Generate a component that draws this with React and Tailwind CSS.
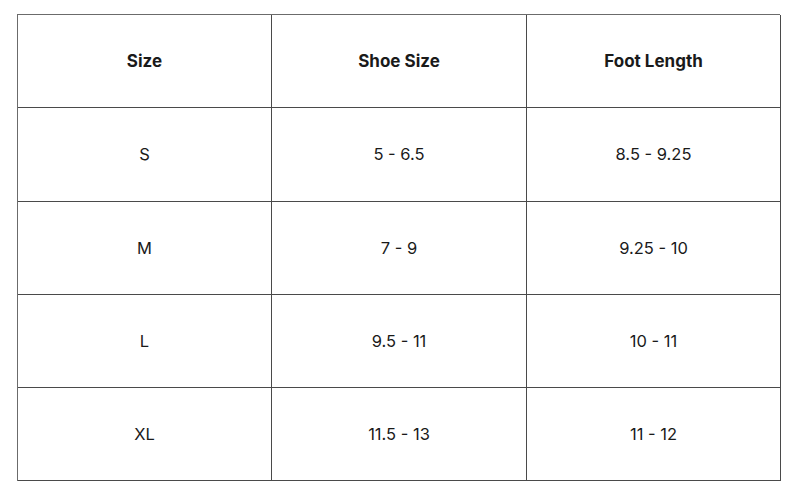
import React from "react";

const rows = [
  ["S", "5 - 6.5", "8.5 - 9.25"],
  ["M", "7 - 9", "9.25 - 10"],
  ["L", "9.5 - 11", "10 - 11"],
  ["XL", "11.5 - 13", "11 - 12"],
];

export default function App() {
  return (
    <div className="w-[800px] h-[500px] bg-white pt-[14px] pl-[17px]" style={{ fontFamily: "Inter, 'Noto Sans', sans-serif" }}>
      <div className="w-[763px] grid grid-cols-[254px_255px_254px] grid-rows-[93px_94px_93px_93px_93px] border-l border-t border-[#6b6b6b] text-[16.5px] text-[#1a1a1a]">
        {["Size", "Shoe Size", "Foot Length"].map((h) => (
          <div key={h} className="flex items-center justify-center pt-[2px] border-r border-b border-[#4a4a4a] font-bold text-[17px]">
            {h}
          </div>
        ))}
        {rows.map((r) =>
          r.map((c, i) => (
            <div key={r[0] + i} className="flex items-center justify-center border-r border-b border-[#4a4a4a]">
              {c}
            </div>
          ))
        )}
      </div>
    </div>
  );
}
